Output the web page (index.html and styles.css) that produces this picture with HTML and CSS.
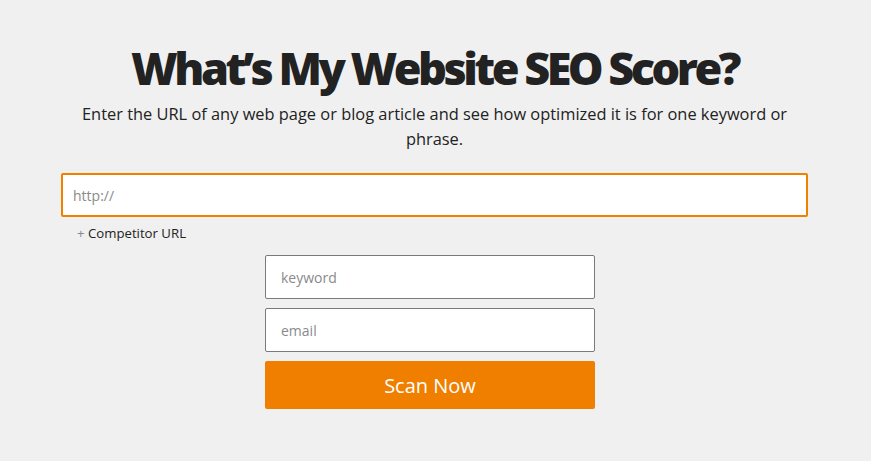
FILE: index.html
```html
<!DOCTYPE html>
<html>
<head>
<meta charset="utf-8">
<link rel="stylesheet" href="styles.css">
</head>
<body>
<main class="page">
  <h1 class="title">What’s My Website SEO Score?</h1>
  <p class="lead">Enter the URL of any web page or blog article and see how optimized it is for one keyword or phrase.</p>
  <form class="form">
    <input class="url" type="text" placeholder="http://">
    <a class="competitor"><span class="plus">+</span> Competitor URL</a>
    <div class="stack">
      <input class="field" type="text" placeholder="keyword">
      <input class="field" type="text" placeholder="email">
      <button class="scan" type="button">Scan Now</button>
    </div>
  </form>
</main>
</body>
</html>
```
FILE: styles.css
```css
html, body {
  margin: 0;
  padding: 0;
  background: #f0f0f0;
  font-family: "Open Sans", "Liberation Sans", sans-serif;
  color: #222;
}
.page {
  width: 747px;
  margin: 0 0 0 61px;
  padding-top: 38px;
  display: flex;
  flex-direction: column;
  align-items: center;
}
.title {
  margin: 0;
  font-size: 45px;
  font-weight: 800;
  letter-spacing: -3.5px;
  line-height: 60px;
  color: #222;
}
.lead {
  margin: 3px 0 0;
  width: 730px;
  font-size: 16.4px;
  line-height: 25px;
  text-align: center;
  color: #222;
}
.form {
  margin-top: 22px;
  width: 100%;
  display: flex;
  flex-direction: column;
}
.url {
  box-sizing: border-box;
  width: 747px;
  height: 44px;
  border: 2px solid #f08000;
  border-radius: 2px;
  background: #fff;
  padding: 0 10px;
  font-family: inherit;
  font-size: 14px;
  outline: none;
}
.url::placeholder, .field::placeholder {
  color: #8a8a8a;
}
.competitor {
  margin: 7px 0 0 16px;
  font-size: 13.2px;
  line-height: 18px;
  color: #222;
}
.plus {
  color: #888;
}
.stack {
  margin: 13px 0 0 204px;
  width: 330px;
  display: flex;
  flex-direction: column;
  gap: 9px;
}
.field {
  box-sizing: border-box;
  width: 330px;
  height: 44px;
  border: 1px solid #7a7a7a;
  border-radius: 2px;
  background: #fff;
  padding: 0 15px;
  font-family: inherit;
  font-size: 14px;
  outline: none;
}
.scan {
  height: 48px;
  border: none;
  border-radius: 2px;
  background: #f07f00;
  color: #fff;
  font-family: inherit;
  font-size: 20px;
  padding: 0;
}
```
